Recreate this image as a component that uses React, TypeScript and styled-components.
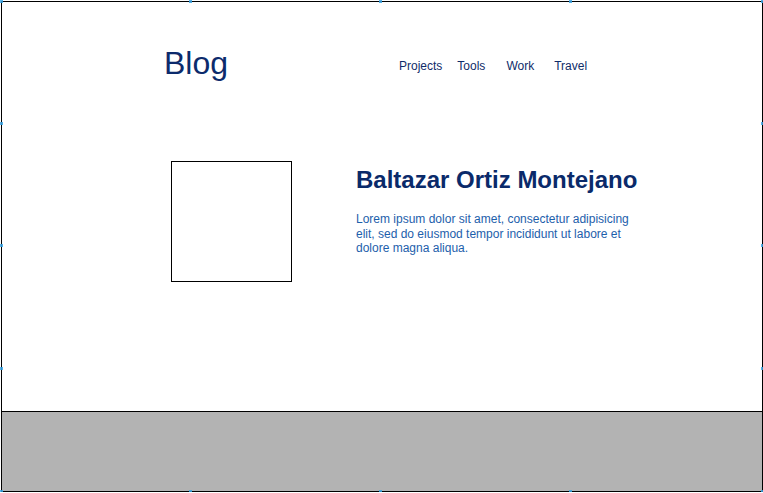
import React from "react";
import styled, { createGlobalStyle } from "styled-components";

const Global = createGlobalStyle`
  html, body { margin: 0; padding: 0; background: #fff; }
  body { font-family: "Liberation Sans", Arial, sans-serif; }
`;

const Frame = styled.div`
  position: relative;
  margin: 1px 0 0 1px;
  width: 760px;
  height: 489px;
  border: 1px solid #000;
  display: flex;
  flex-direction: column;
  background: #fff;
`;

const Body = styled.div`
  flex: 0 0 409px;
  display: flex;
  flex-direction: column;
`;

const Header = styled.header`
  display: flex;
  align-items: flex-start;
  padding: 45px 0 0 162px;
`;

const Logo = styled.h1`
  margin: 0;
  width: 64px;
  font-size: 32px;
  line-height: 32px;
  font-weight: 400;
  color: #0c2b6c;
`;

const Nav = styled.nav`
  display: flex;
  margin: 13px 0 0 171px;
`;

const NavItem = styled.a<{ $offset: number }>`
  margin-left: ${(p) => p.$offset}px;
  font-size: 12px;
  line-height: 12px;
  color: #0f2c69;
  text-decoration: none;
`;

const Hero = styled.section`
  display: flex;
  align-items: flex-start;
  padding: 82px 0 0 169px;
`;

const Portrait = styled.div`
  width: 119px;
  height: 119px;
  border: 1px solid #000;
`;

const Info = styled.div`
  margin: 7px 0 0 64px;
  width: 300px;
`;

const Name = styled.h2`
  margin: 0;
  font-size: 24px;
  line-height: 24px;
  font-weight: 700;
  color: #0a2a6a;
  white-space: nowrap;
`;

const Bio = styled.p`
  margin: 20px 0 0;
  width: 285px;
  font-size: 12px;
  line-height: 14.5px;
  color: #1d60ab;
`;

const Footer = styled.footer`
  flex: 1;
  border-top: 1px solid #000;
  background: #b3b3b3;
`;

const Handle = styled.span<{ $x: number; $y: number }>`
  position: absolute;
  left: ${(p) => p.$x - 2}px;
  top: ${(p) => p.$y - 2}px;
  width: 3px;
  height: 3px;
  background: #39a6e6;
  opacity: 0.85;
`;

const navItems = [
  { label: "Projects", offset: 0 },
  { label: "Tools", offset: 15 },
  { label: "Work", offset: 21 },
  { label: "Travel", offset: 20 },
];

const handles: Array<[number, number]> = [
  [0, 0], [189, 0], [379, 0], [569, 0], [761, 0],
  [0, 122], [0, 244], [0, 367], [0, 490],
  [761, 122], [761, 244], [761, 367], [761, 490],
  [189, 490], [379, 490], [569, 490],
];

export default function App() {
  return (
    <>
      <Global />
      <Frame>
        <Body>
          <Header>
            <Logo>Blog</Logo>
            <Nav>
              {navItems.map((n) => (
                <NavItem key={n.label} $offset={n.offset}>
                  {n.label}
                </NavItem>
              ))}
            </Nav>
          </Header>
          <Hero>
            <Portrait />
            <Info>
              <Name>Baltazar Ortiz Montejano</Name>
              <Bio>
                Lorem ipsum dolor sit amet, consectetur adipisicing elit, sed do
                eiusmod tempor incididunt ut labore et dolore magna aliqua.
              </Bio>
            </Info>
          </Hero>
        </Body>
        <Footer />
        {handles.map(([x, y], i) => (
          <Handle key={i} $x={x} $y={y} />
        ))}
      </Frame>
    </>
  );
}
